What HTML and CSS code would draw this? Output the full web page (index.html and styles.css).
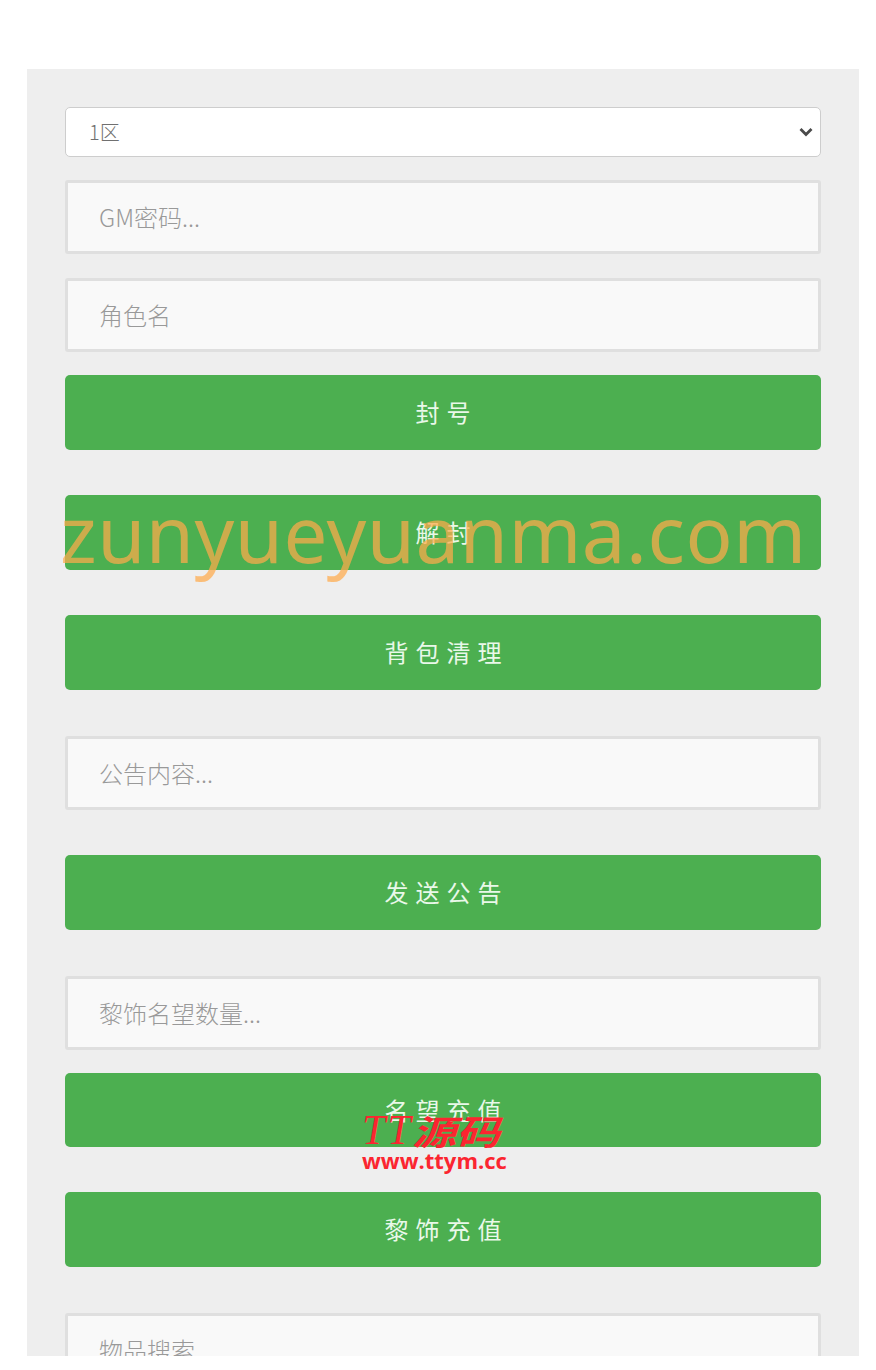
FILE: index.html
```html
<!DOCTYPE html>
<html lang="zh-CN">
<head>
    <meta charset="UTF-8">
    <meta name="viewport" content="width=device-width, initial-scale=1.0">
    <title>GM</title>
    <link rel="stylesheet" href="styles.css">
</head>
<body>
    <div class="page">
        <div class="panel">
            <div class="select-wrap">
                <select class="server-select">
                    <option>1区</option>
                    <option>2区</option>
                </select>
                <svg class="select-arrow" width="14" height="10" viewBox="0 0 14 10">
                    <path d="M1.5 2 L7 7.5 L12.5 2" fill="none" stroke="#4a4a4a" stroke-width="2.8"/>
                </svg>
            </div>
            <input class="field field-first" type="password" placeholder="GM密码...">
            <input class="field" type="text" placeholder="角色名">
            <button class="btn">封号</button>
            <button class="btn">解封</button>
            <button class="btn">背包清理</button>
            <input class="field section-start field-wide-gap" type="text" placeholder="公告内容...">
            <button class="btn">发送公告</button>
            <input class="field section-start" type="text" placeholder="黎饰名望数量...">
            <button class="btn btn-short">名望充值</button>
            <button class="btn">黎饰充值</button>
            <input class="field section-start" type="text" placeholder="物品搜索">
        </div>
        <div class="mark-site">zunyueyuanma.com</div>
        <div class="mark-logo">
            <div class="mark-logo-title"><i class="mark-logo-tt">TT</i><i class="mark-logo-cn">源码</i></div>
            <div class="mark-logo-url">www.ttym.cc</div>
        </div>
    </div>
</body>
</html>
```

FILE: styles.css
```css
* {
    box-sizing: border-box;
}

body {
    margin: 0;
    background: #fff;
    font-family: "Open Sans", "Noto Sans CJK SC", sans-serif;
}

.page {
    position: relative;
    height: 1356px;
    overflow: hidden;
}

.panel {
    display: flex;
    flex-direction: column;
    margin: 69px 17px 0 27px;
    padding: 38px 38px 0;
    min-height: 1287px;
    background: #eeeeee;
}

.select-wrap {
    position: relative;
    flex: none;
    margin-bottom: 23px;
}

.server-select {
    display: block;
    width: 100%;
    height: 50px;
    padding: 0 30px 2px 23px;
    border: 1px solid #cdcdcd;
    border-radius: 5px;
    background: #fff;
    color: #707070;
    font-family: "Noto Sans CJK SC", sans-serif;
    font-size: 20px;
    font-weight: 300;
    appearance: none;
}

.select-arrow {
    position: absolute;
    top: 20px;
    right: 8px;
    pointer-events: none;
}

.field {
    flex: none;
    width: 100%;
    height: 74px;
    margin-bottom: 23px;
    padding: 0 31px 2px;
    border: 3px solid #dfdfdf;
    border-radius: 3px;
    background: #f9f9f9;
    font-family: "Noto Sans CJK SC", sans-serif;
    font-size: 24px;
    font-weight: 300;
    outline: none;
}

.field::placeholder {
    color: #999;
}

.field-first {
    margin-bottom: 24px;
}

.section-start {
    margin-top: 1px;
}

.field-wide-gap {
    margin-bottom: 45px;
}

.btn {
    flex: none;
    width: 100%;
    height: 75px;
    margin-bottom: 45px;
    padding: 0 0 2px 7px;
    border: none;
    border-radius: 5px;
    background: #4caf50;
    color: #e9f8e9;
    font-family: "Noto Sans CJK SC", sans-serif;
    font-size: 24px;
    letter-spacing: 7px;
}

.btn-short {
    height: 74px;
}

.mark-site {
    position: absolute;
    top: 485px;
    left: 60px;
    color: rgba(255, 170, 75, 0.72);
    font-family: "Noto Sans", sans-serif;
    font-size: 78px;
    letter-spacing: 0.5px;
    line-height: 96px;
    white-space: nowrap;
}

.mark-logo {
    position: absolute;
    top: 1110px;
    left: 362px;
    color: #fb2530;
}

.mark-logo-title {
    display: flex;
    align-items: center;
    height: 39px;
    white-space: nowrap;
}

.mark-logo-tt {
    width: 50px;
    font-family: "Liberation Serif", serif;
    font-size: 42px;
    letter-spacing: 2px;
}

.mark-logo-cn {
    font-family: "Noto Sans CJK SC", sans-serif;
    font-size: 44px;
    font-weight: 700;
    transform: scaleY(0.78);
}

.mark-logo-url {
    font-family: "Open Sans", sans-serif;
    font-size: 22px;
    font-weight: 700;
    line-height: 22px;
    white-space: nowrap;
}
```
